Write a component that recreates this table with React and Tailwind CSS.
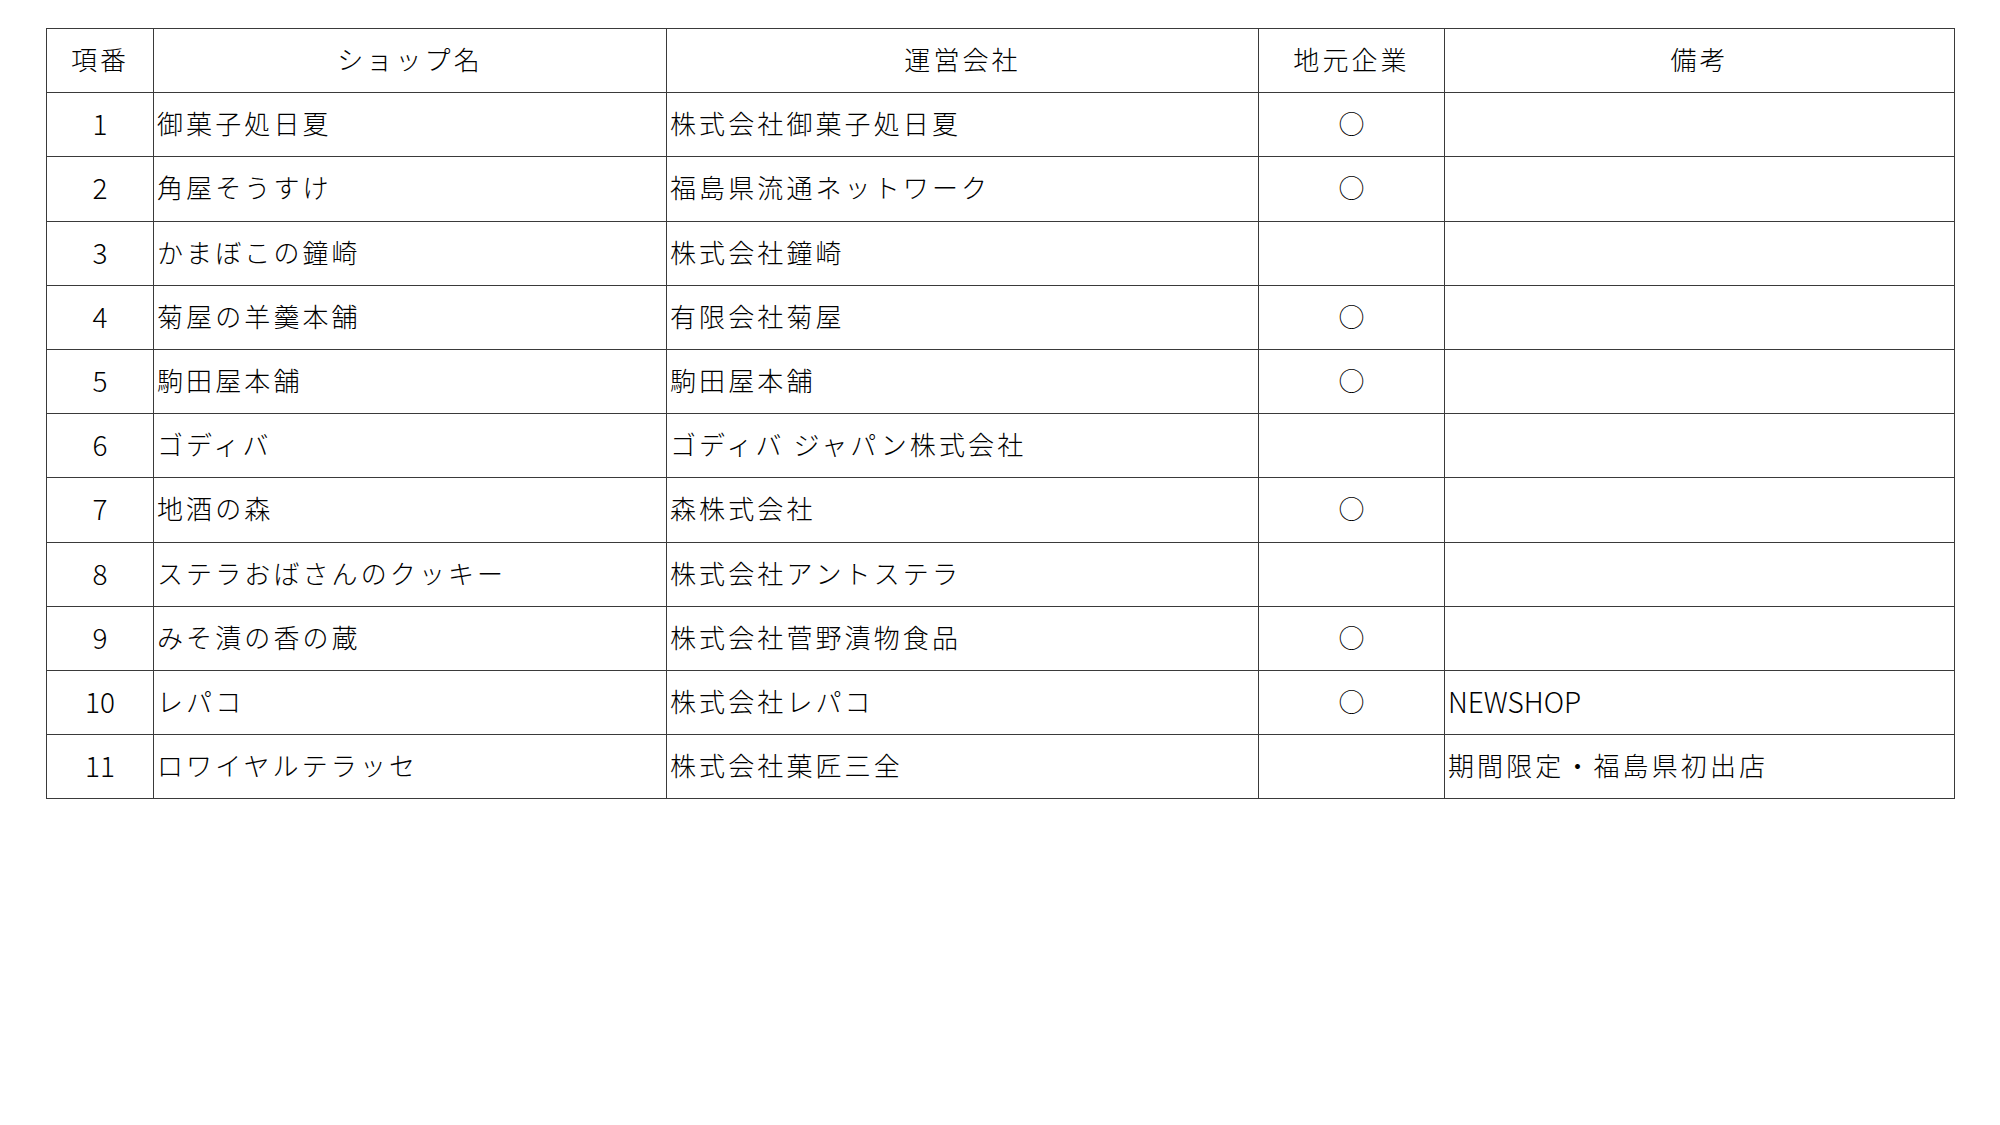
import React from "react";

const rows = [
  ["1", "御菓子処日夏", "株式会社御菓子処日夏", true, ""],
  ["2", "角屋そうすけ", "福島県流通ネットワーク", true, ""],
  ["3", "かまぼこの鐘崎", "株式会社鐘崎", false, ""],
  ["4", "菊屋の羊羹本舗", "有限会社菊屋", true, ""],
  ["5", "駒田屋本舗", "駒田屋本舗", true, ""],
  ["6", "ゴディバ", "ゴディバ ジャパン株式会社", false, ""],
  ["7", "地酒の森", "森株式会社", true, ""],
  ["8", "ステラおばさんのクッキー", "株式会社アントステラ", false, ""],
  ["9", "みそ漬の香の蔵", "株式会社菅野漬物食品", true, ""],
  ["10", "レパコ", "株式会社レパコ", true, "NEWSHOP"],
  ["11", "ロワイヤルテラッセ", "株式会社菓匠三全", false, "期間限定・福島県初出店"],
];

const cell = "border-[1.5px] border-[#3a3a3a] h-[64.2px] p-0 align-middle";
const txt = "text-[26px] leading-none tracking-[3.1px] text-black";

export default function App() {
  return (
    <div
      className="w-[2000px] h-[1125px] bg-white pl-[46px] pt-[28px]"
      style={{ fontFamily: '"Noto Sans CJK JP", "Noto Sans", sans-serif' }}
    >
      <table className="table-fixed border-collapse w-[1908px]">
        <colgroup>
          <col className="w-[107px]" />
          <col className="w-[513px]" />
          <col className="w-[592px]" />
          <col className="w-[186px]" />
          <col className="w-[510px]" />
        </colgroup>
        <thead>
          <tr>
            {["項番", "ショップ名", "運営会社", "地元企業", "備考"].map((h) => (
              <th key={h} className={`${cell} font-light text-center`}>
                <span className={`${txt} font-light`}>{h}</span>
              </th>
            ))}
          </tr>
        </thead>
        <tbody>
          {rows.map((r) => (
            <tr key={r[0]}>
              <td className={`${cell} text-center`}>
                <span className="text-[28px] leading-none text-black font-light">{r[0]}</span>
              </td>
              <td className={`${cell} pl-[3px]`}>
                <span className={`${txt} font-light`}>{r[1]}</span>
              </td>
              <td className={`${cell} pl-[3px]`}>
                <span className={`${txt} font-light`}>{r[2]}</span>
              </td>
              <td className={`${cell} text-center`}>
                {r[3] && <span className="text-[26px] leading-none text-black font-light">○</span>}
              </td>
              <td className={`${cell} pl-[3px]`}>
                {r[4] === "NEWSHOP" ? (
                  <span className="text-[28px] leading-none text-black font-light">{r[4]}</span>
                ) : (
                  <span className={`${txt} font-light`}>{r[4]}</span>
                )}
              </td>
            </tr>
          ))}
        </tbody>
      </table>
    </div>
  );
}
